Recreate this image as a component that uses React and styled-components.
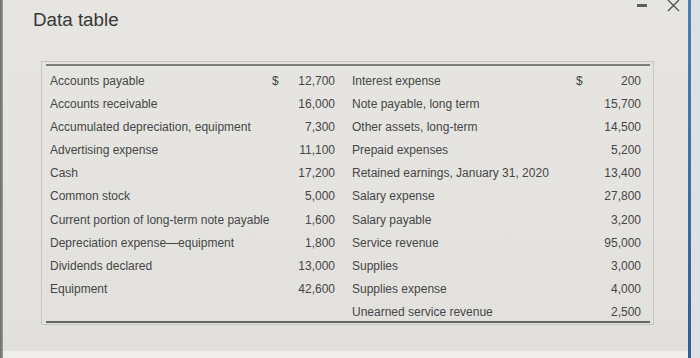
import React from "react";
import styled, { createGlobalStyle } from "styled-components";

const Global = createGlobalStyle`
  html, body { margin: 0; padding: 0; }
  body {
    width: 700px; height: 358px; overflow: hidden;
    background: #e3e2df;
    font-family: "Liberation Sans", Arial, sans-serif;
  }
`;

const Screen = styled.div`
  display: flex;
  width: 700px;
  height: 358px;
`;

const LeftEdge = styled.div`
  width: 3px;
  background: linear-gradient(90deg, #6a6a69, #9a9a98);
`;

const DialogColumn = styled.div`
  flex: 1;
  display: flex;
  flex-direction: column;
`;

const Dialog = styled.div`
  flex: 1;
  display: flex;
  flex-direction: column;
  background: linear-gradient(180deg, #e6e5e2 0%, #e4e3e0 60%, #e1e0dd 100%);
  padding-left: 30px;
`;

const BottomStrip = styled.div`
  height: 7px;
  background: #efeeec;
`;

const BlueLine = styled.div`
  width: 3px;
  background: linear-gradient(180deg, #4d7fb0, #2f5f92);
`;

const RightGap = styled.div`
  width: 9px;
  background: #dde1e3;
`;

const Header = styled.div`
  display: flex;
  justify-content: space-between;
  align-items: flex-start;
  height: 61px;
`;

const Title = styled.h1`
  margin: 9px 0 0 0;
  font-size: 18.8px;
  line-height: 22px;
  font-weight: 400;
  color: #383838;
`;

const Controls = styled.div`
  display: flex;
  align-items: flex-start;
  gap: 20px;
  margin-right: 8px;
`;

const Minimize = styled.div`
  width: 10px;
  height: 3px;
  margin-top: 4px;
  background: #5e5e5e;
`;

const CloseIcon = styled.svg`
  display: block;
  margin-top: -1px;
`;

const Box = styled.div`
  margin-left: 8px;
  width: 604px;
  border: 1px solid #c6c5c2;
  padding: 2px 3px 1px 4px;
`;

const Lines = styled.div`
  border-top: 2px solid #7e7e7d;
  border-bottom: 2px solid #676766;
  padding-left: 4px;
`;

const Row = styled.div`
  display: flex;
  height: 23.2px;
  box-sizing: border-box;
  padding-top: 7.5px;
`;

const Half = styled.div`
  display: grid;
  grid-template-columns: ${(p) => p.$cols};
  margin-left: ${(p) => p.$offset || 0}px;
`;

const Cell = styled.div`
  font-size: 12px;
  line-height: 14px;
  color: #464646;
  white-space: nowrap;
  text-align: ${(p) => (p.$num ? "right" : "left")};
  padding-left: ${(p) => (p.$sign ? 3 : 0)}px;
`;

const left = [
  ["Accounts payable", "12,700", true],
  ["Accounts receivable", "16,000"],
  ["Accumulated depreciation, equipment", "7,300"],
  ["Advertising expense", "11,100"],
  ["Cash", "17,200"],
  ["Common stock", "5,000"],
  ["Current portion of long-term note payable", "1,600"],
  ["Depreciation expense\u2014equipment", "1,800"],
  ["Dividends declared", "13,000"],
  ["Equipment", "42,600"],
  ["", ""],
];

const right = [
  ["Interest expense", "200", true],
  ["Note payable, long term", "15,700"],
  ["Other assets, long-term", "14,500"],
  ["Prepaid expenses", "5,200"],
  ["Retained earnings, January 31, 2020", "13,400"],
  ["Salary expense", "27,800"],
  ["Salary payable", "3,200"],
  ["Service revenue", "95,000"],
  ["Supplies", "3,000"],
  ["Supplies expense", "4,000"],
  ["Unearned service revenue", "2,500"],
];

export default function App() {
  return (
    <>
      <Global />
      <Screen>
        <LeftEdge />
        <DialogColumn>
          <Dialog>
            <Header>
              <Title>Data table</Title>
              <Controls>
                <Minimize />
                <CloseIcon width="13" height="13" viewBox="0 0 13 13">
                  <path d="M1 1 L12 12 M12 1 L1 12" stroke="#555" strokeWidth="1.4" fill="none" />
                </CloseIcon>
              </Controls>
            </Header>
            <Box>
              <Lines>
                {left.map((l, i) => {
                  const r = right[i];
                  return (
                    <Row key={i}>
                      <Half $cols="219px 12px 54px">
                        <Cell>{l[0]}</Cell>
                        <Cell $sign>{l[2] ? "$" : ""}</Cell>
                        <Cell $num>{l[1]}</Cell>
                      </Half>
                      <Half $cols="221px 12px 56px" $offset={17}>
                        <Cell>{r[0]}</Cell>
                        <Cell $sign>{r[2] ? "$" : ""}</Cell>
                        <Cell $num>{r[1]}</Cell>
                      </Half>
                    </Row>
                  );
                })}
              </Lines>
            </Box>
          </Dialog>
          <BottomStrip />
        </DialogColumn>
        <BlueLine />
        <RightGap />
      </Screen>
    </>
  );
}
